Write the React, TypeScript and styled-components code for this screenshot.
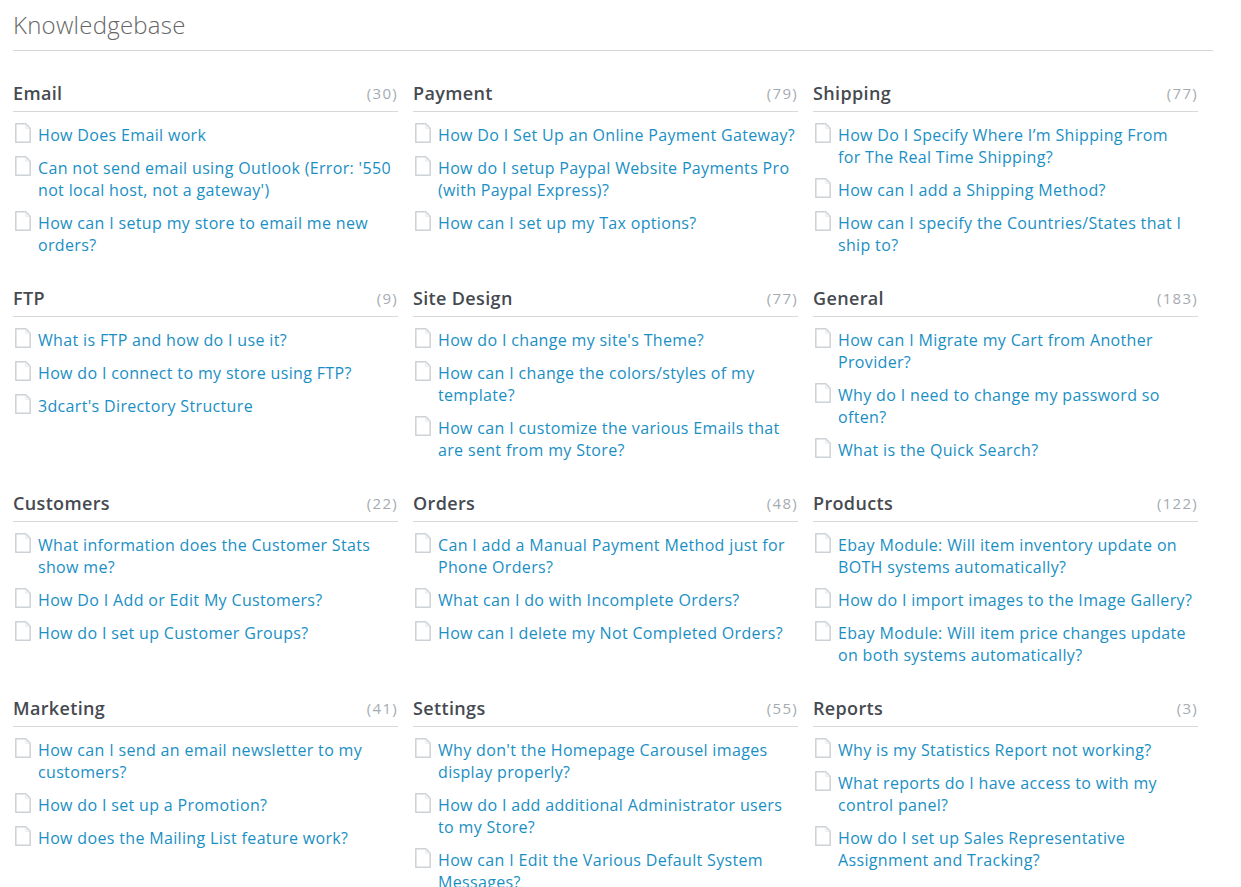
import React from "react";
import styled, { createGlobalStyle } from "styled-components";

const Global = createGlobalStyle`
  html, body { margin: 0; padding: 0; background: #fff; height: 887px; overflow: hidden; }
  body { font-family: "Open Sans", "Liberation Sans", sans-serif; }
`;

const Page = styled.div`
  padding: 0 28px 0 13px;
  width: 1200px;
`;

const Title = styled.h1`
  margin: 0;
  height: 50px;
  padding: 0;
  font-size: 24px;
  line-height: 50px;
  font-weight: 300;
  letter-spacing: 0.25px;
  color: #666;
  border-bottom: 1px solid #d5d9da;
`;

const Grid = styled.div`
  display: grid;
  grid-template-columns: repeat(3, 385px);
  column-gap: 15px;
  grid-auto-rows: 205px;
  padding-top: 25px;
`;

const Section = styled.section`
  min-width: 0;
`;

const Head = styled.div`
  display: flex;
  justify-content: space-between;
  align-items: center;
  height: 33px;
  padding-bottom: 2px;
  border-bottom: 1px solid #d5d9da;
`;

const Name = styled.h2`
  margin: 0;
  font-size: 18px;
  font-weight: 600;
  letter-spacing: 0.35px;
  color: #464a50;
`;

const Count = styled.span`
  font-size: 15px;
  letter-spacing: 1.3px;
  color: #a6abb2;
`;

const List = styled.ul`
  list-style: none;
  margin: 0;
  padding: 11px 0 0;
  display: flex;
  flex-direction: column;
  gap: 10px;
`;

const Item = styled.li`
  display: flex;
  align-items: flex-start;
  gap: 7px;
  padding-left: 2px;
`;

const DocIcon = styled.svg`
  flex: none;
  width: 16px;
  height: 20px;
`;

const Link = styled.a`
  font-size: 16px;
  line-height: 22px;
  letter-spacing: 0.34px;
  padding-top: 1px;
  color: #1a8fc4;
  text-decoration: none;
`;

const Doc = () => (
  <DocIcon viewBox="0 0 16 20" fill="none">
    <path
      d="M0.8 0.8H10.8L15.2 5.2V19.2H0.8Z"
      fill="#fff"
      stroke="#cdd2d6"
      strokeWidth="1.5"
      strokeLinejoin="round"
    />
    <path d="M10.8 1V5.2H15" stroke="#e2e5e8" strokeWidth="1" />
  </DocIcon>
);

const sections: { name: string; count: number; items: string[] }[] = [
  { name: "Email", count: 30, items: ["How Does Email work", "Can not send email using Outlook (Error: '550 not local host, not a gateway')", "How can I setup my store to email me new orders?"] },
  { name: "Payment", count: 79, items: ["How Do I Set Up an Online Payment Gateway?", "How do I setup Paypal Website Payments Pro (with Paypal Express)?", "How can I set up my Tax options?"] },
  { name: "Shipping", count: 77, items: ["How Do I Specify Where I’m Shipping From for\u00a0The Real Time Shipping?", "How can I add a Shipping Method?", "How can I specify the Countries/States that I ship to?"] },
  { name: "FTP", count: 9, items: ["What is FTP and how do I use it?", "How do I connect to my store using FTP?", "3dcart's Directory Structure"] },
  { name: "Site Design", count: 77, items: ["How do I change my site's Theme?", "How can I change the colors/styles of my template?", "How can I customize the various Emails that are sent from my Store?"] },
  { name: "General", count: 183, items: ["How can I Migrate my Cart from Another Provider?", "Why do I need to change my password so often?", "What is the Quick Search?"] },
  { name: "Customers", count: 22, items: ["What information does the Customer Stats show me?", "How Do I Add or Edit My Customers?", "How do I set up Customer Groups?"] },
  { name: "Orders", count: 48, items: ["Can I add a Manual Payment Method just for Phone Orders?", "What can I do with Incomplete Orders?", "How can I delete my Not Completed Orders?"] },
  { name: "Products", count: 122, items: ["Ebay Module: Will item inventory update on BOTH systems automatically?", "How do I import images to the Image Gallery?", "Ebay Module: Will item price changes update on both systems automatically?"] },
  { name: "Marketing", count: 41, items: ["How can I send an email newsletter to my customers?", "How do I set up a Promotion?", "How does the Mailing List feature work?"] },
  { name: "Settings", count: 55, items: ["Why don't the Homepage Carousel images display properly?", "How do I add additional Administrator users to my Store?", "How can I Edit the Various Default System Messages?"] },
  { name: "Reports", count: 3, items: ["Why is my Statistics Report not working?", "What reports do I have access to with my control panel?", "How do I set up Sales Representative Assignment and Tracking?"] },
];

export default function App() {
  return (
    <Page>
      <Global />
      <Title>Knowledgebase</Title>
      <Grid>
        {sections.map((s) => (
          <Section key={s.name}>
            <Head>
              <Name>{s.name}</Name>
              <Count>({s.count})</Count>
            </Head>
            <List>
              {s.items.map((text) => (
                <Item key={text}>
                  <Doc />
                  <Link href="#">{text}</Link>
                </Item>
              ))}
            </List>
          </Section>
        ))}
      </Grid>
    </Page>
  );
}
